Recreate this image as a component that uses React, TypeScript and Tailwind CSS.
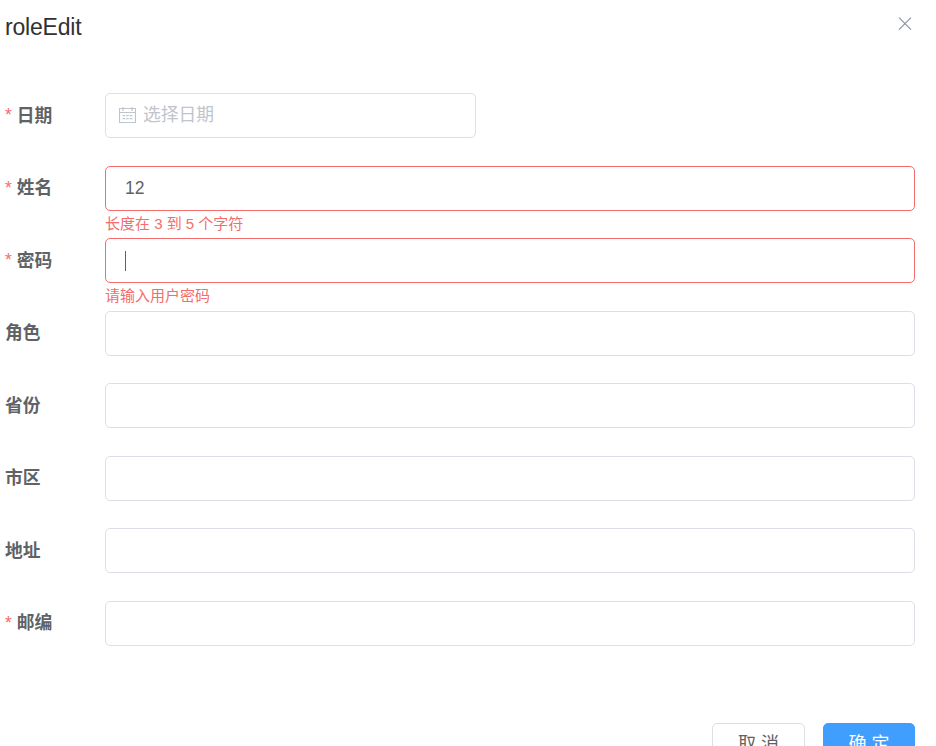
import React from "react";

type Field = {
  label: string;
  required?: boolean;
  value?: string;
  error?: string;
  date?: boolean;
  focused?: boolean;
};

const fields: Field[] = [
  { label: "日期", required: true, date: true },
  { label: "姓名", required: true, value: "12", error: "长度在 3 到 5 个字符" },
  { label: "密码", required: true, focused: true, error: "请输入用户密码" },
  { label: "角色" },
  { label: "省份" },
  { label: "市区" },
  { label: "地址" },
  { label: "邮编", required: true },
];

function CalendarIcon() {
  return (
    <svg width="17" height="17" viewBox="0 0 17 17" fill="none" stroke="#c0c4cc" className="shrink-0">
      <path d="M.5 1.5h16v14H.5z" strokeWidth="1.2" />
      <path d="M.5 5.5h16M4 0v4M13 0v4" strokeWidth="1.2" />
      <path d="M3.6 8.6h2.6M7.2 8.6h2.6M10.8 8.6h2.6M3.6 11.6h2.6M7.2 11.6h2.6M10.8 11.6h2.6" strokeWidth="1.2" />
    </svg>
  );
}

function FormRow({ field }: { field: Field }) {
  return (
    <div className="flex h-[72.5px] items-start">
      <div className="flex h-[45px] w-[100px] shrink-0 items-center text-[17.5px] font-bold text-[#606266]">
        {field.required && <span className="mr-[5px] font-normal text-[#f56c6c]">*</span>}
        <span className="pt-[1.5px] text-[17.8px]">{field.label}</span>
      </div>
      <div className={field.date ? "w-[371px]" : "w-[810px]"}>
        <div
          className={`flex h-[45px] items-center rounded-[5px] border text-[17.5px] ${
            field.error ? "border-[#f56c6c]" : "border-[#dcdfe6]"
          } ${field.date ? "pl-[13px]" : "pl-[19px]"}`}
        >
          {field.date && (
            <>
              <CalendarIcon />
              <span className="ml-[7px] text-[17.8px] text-[#c0c4cc]">选择日期</span>
            </>
          )}
          {field.value && <span className="text-[#606266]">{field.value}</span>}
          {field.focused && <span className="h-5 w-px bg-[#606266]" />}
        </div>
        {field.error && <p className="pt-[5px] text-[15px] leading-[15px] text-[#f56c6c]">{field.error}</p>}
      </div>
    </div>
  );
}

export default function App() {
  return (
    <div className="h-[746px] w-[936px] overflow-hidden bg-white pl-[5px] pr-[21px] font-['Liberation_Sans','Noto_Sans_CJK_SC',sans-serif]">
      <header className="flex h-[93px] items-start justify-between">
        <h1 className="pt-[12px] text-[23px] leading-[30px] tracking-[-0.2px] text-[#303133]">roleEdit</h1>
        <svg width="14" height="14" viewBox="0 0 14 14" fill="none" stroke="#8c93a3" strokeWidth="1.2" className="mr-[3px] mt-[17px]">
          <path d="M1 .7l12 12M13 .7L1 12.7" />
        </svg>
      </header>
      <form>
        {fields.map((f) => (
          <FormRow key={f.label} field={f} />
        ))}
      </form>
      <footer className="mt-[50px] flex justify-end gap-[18px] text-[18px]">
        <button type="button" className="h-[45px] w-[93px] whitespace-nowrap rounded-[5px] border border-[#dcdfe6] pb-[3px] text-[#606266]">
          取 消
        </button>
        <button type="button" className="h-[45px] w-[92px] whitespace-nowrap rounded-[5px] border border-[#409eff] bg-[#409eff] pb-[3px] text-white">
          确 定
        </button>
      </footer>
    </div>
  );
}
